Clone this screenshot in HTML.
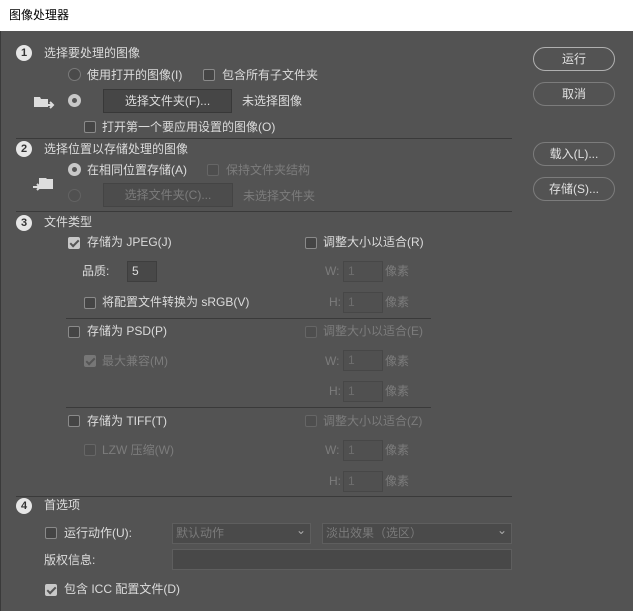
<!DOCTYPE html>
<html><head><meta charset="utf-8"><style>
*{margin:0;padding:0;box-sizing:border-box}
body{width:633px;height:611px;background:#535353;position:relative;overflow:hidden;font-family:"Liberation Sans","Noto Sans CJK SC",sans-serif;font-size:12px;color:#dcdcdc}
.a{position:absolute;white-space:nowrap;line-height:14px}
.d{color:#7c7c7c}
#title{position:absolute;left:0;top:0;width:633px;height:31px;background:#fff;color:#000;font-size:12px;line-height:31px;padding-left:9px}
#lb{position:absolute;left:0;top:31px;width:1px;height:580px;background:#3a3a3a}
.num{position:absolute;width:16px;height:16px;border-radius:50%;background:#e6e6e6;color:#333;font-weight:bold;font-size:11px;text-align:center;line-height:16px}
.cb{position:absolute;width:12px;height:12px;border:1px solid #8a8a8a;background:#454545;border-radius:2px}
.cb.dis{border-color:#666;background:#4e4e4e}
.cb.on::after{content:"";position:absolute;left:3px;top:0px;width:3px;height:7px;border:solid #555;border-width:0 2px 2px 0;transform:rotate(45deg)}
.cb.on{background:#c8c8c8;border-color:#c8c8c8}
.cb.on.dis{background:#777;border-color:#777}
.cb.on.dis::after{border-color:#555}
.rd{position:absolute;width:13px;height:13px;border-radius:50%;border:1px solid #7a7a7a;background:#4a4a4a}
.rd.on{background:#c8c8c8;border-color:#c8c8c8}
.rd.on::after{content:"";position:absolute;left:3px;top:3px;width:5px;height:5px;border-radius:50%;background:#555}
.rd.dis{border-color:#636363;background:#505050}
.btn{position:absolute;background:#464646;border:1px solid #383838;text-align:center;line-height:22px}
.in{position:absolute;background:#484848;border:1px solid #3e3e3e;padding-left:4px;line-height:18px}
.in.dis{background:#505050;border-color:#474747;color:#6e6e6e}
.hr{position:absolute;height:1px;background:#3a3a3a}
.pill{position:absolute;left:533px;width:82px;height:24px;border:1px solid #7c7c7c;border-radius:12px;text-align:center;line-height:22px;color:#e0e0e0}
.sel{position:absolute;background:#4a4a4a;border:1px solid #5e5e5e;color:#7a7a7a;padding-left:3px;line-height:18px}
.sel::after{content:"⌄";position:absolute;right:4px;top:-3px;color:#aaa;font-size:12px}
</style></head><body>
<div id="title">图像处理器</div>
<div id="lb"></div>

<div class="num" style="left:16px;top:45px">1</div>
<div class="a" style="left:44px;top:46px">选择要处理的图像</div>
<div class="rd" style="left:68px;top:68px"></div>
<div class="a" style="left:87px;top:68px">使用打开的图像(I)</div>
<div class="cb" style="left:203px;top:69px"></div>
<div class="a" style="left:222px;top:68px">包含所有子文件夹</div>
<svg style="position:absolute;left:33px;top:94px" width="22" height="16"><path d="M1 3h6l1 2h7v8H1z" fill="#ddd"/><path d="M13 11h6M17 8l3 3-3 3" stroke="#ddd" stroke-width="2" fill="none"/></svg>
<div class="rd on" style="left:68px;top:94px"></div>
<div class="btn" style="left:103px;top:89px;width:129px;height:24px">选择文件夹(F)...</div>
<div class="a" style="left:242px;top:94px">未选择图像</div>
<div class="cb" style="left:84px;top:121px"></div>
<div class="a" style="left:102px;top:120px">打开第一个要应用设置的图像(O)</div>
<div class="hr" style="left:16px;top:138px;width:496px"></div>

<div class="num" style="left:16px;top:141px">2</div>
<div class="a" style="left:44px;top:142px">选择位置以存储处理的图像</div>
<div class="rd on" style="left:68px;top:163px"></div>
<div class="a" style="left:87px;top:163px">在相同位置存储(A)</div>
<div class="cb dis" style="left:207px;top:164px"></div>
<div class="a d" style="left:226px;top:163px">保持文件夹结构</div>
<svg style="position:absolute;left:32px;top:177px" width="22" height="16"><path d="M7 1h7l1 1h6v10H7z" fill="#ddd"/><path d="M1 10h7M5 7l3 3-3 3" stroke="#ddd" stroke-width="2" fill="none"/></svg>
<div class="rd dis" style="left:68px;top:189px"></div>
<div class="btn d" style="left:103px;top:183px;width:130px;height:24px;background:#4c4c4c;border-color:#444">选择文件夹(C)...</div>
<div class="a d" style="left:243px;top:189px">未选择文件夹</div>
<div class="hr" style="left:16px;top:211px;width:496px"></div>

<div class="num" style="left:16px;top:215px">3</div>
<div class="a" style="left:44px;top:215px">文件类型</div>
<div class="cb on" style="left:68px;top:237px"></div>
<div class="a" style="left:87px;top:235px">存储为 JPEG(J)</div>
<div class="cb" style="left:305px;top:237px"></div>
<div class="a" style="left:323px;top:235px">调整大小以适合(R)</div>
<div class="a" style="left:82px;top:264px">品质:</div>
<div class="in" style="left:127px;top:261px;width:30px;height:21px;color:#ddd">5</div>
<div class="a d" style="left:325px;top:264px">W:</div><div class="in dis" style="left:343px;top:261px;width:40px;height:21px">1</div><div class="a d" style="left:385px;top:264px">像素</div>
<div class="cb" style="left:84px;top:297px"></div>
<div class="a" style="left:102px;top:295px">将配置文件转换为 sRGB(V)</div>
<div class="a d" style="left:329px;top:295px">H:</div><div class="in dis" style="left:343px;top:292px;width:40px;height:21px">1</div><div class="a d" style="left:385px;top:295px">像素</div>
<div class="hr" style="left:66px;top:318px;width:365px"></div>

<div class="cb" style="left:68px;top:326px"></div>
<div class="a" style="left:87px;top:324px">存储为 PSD(P)</div>
<div class="cb dis" style="left:305px;top:326px"></div>
<div class="a d" style="left:323px;top:324px">调整大小以适合(E)</div>
<div class="cb on dis" style="left:84px;top:355px"></div>
<div class="a d" style="left:102px;top:354px">最大兼容(M)</div>
<div class="a d" style="left:325px;top:354px">W:</div><div class="in dis" style="left:343px;top:350px;width:40px;height:21px">1</div><div class="a d" style="left:385px;top:354px">像素</div>
<div class="a d" style="left:329px;top:384px">H:</div><div class="in dis" style="left:343px;top:381px;width:40px;height:21px">1</div><div class="a d" style="left:385px;top:384px">像素</div>
<div class="hr" style="left:66px;top:407px;width:365px"></div>

<div class="cb" style="left:68px;top:415px"></div>
<div class="a" style="left:87px;top:414px">存储为 TIFF(T)</div>
<div class="cb dis" style="left:305px;top:415px"></div>
<div class="a d" style="left:323px;top:414px">调整大小以适合(Z)</div>
<div class="cb dis" style="left:84px;top:444px"></div>
<div class="a d" style="left:102px;top:443px">LZW 压缩(W)</div>
<div class="a d" style="left:325px;top:443px">W:</div><div class="in dis" style="left:343px;top:440px;width:40px;height:21px">1</div><div class="a d" style="left:385px;top:443px">像素</div>
<div class="a d" style="left:329px;top:474px">H:</div><div class="in dis" style="left:343px;top:471px;width:40px;height:21px">1</div><div class="a d" style="left:385px;top:474px">像素</div>
<div class="hr" style="left:16px;top:496px;width:496px"></div>

<div class="num" style="left:16px;top:498px">4</div>
<div class="a" style="left:44px;top:498px">首选项</div>
<div class="cb" style="left:45px;top:527px"></div>
<div class="a" style="left:64px;top:526px">运行动作(U):</div>
<div class="sel" style="left:172px;top:523px;width:139px;height:21px">默认动作</div>
<div class="sel" style="left:322px;top:523px;width:190px;height:21px">淡出效果（选区）</div>
<div class="a" style="left:44px;top:553px">版权信息:</div>
<div class="in" style="left:172px;top:549px;width:340px;height:21px;border-color:#5e5e5e"></div>
<div class="cb on" style="left:45px;top:584px"></div>
<div class="a" style="left:64px;top:582px">包含 ICC 配置文件(D)</div>

<div class="pill" style="top:47px;border-color:#b0b0b0">运行</div>
<div class="pill" style="top:82px">取消</div>
<div class="pill" style="top:142px">载入(L)...</div>
<div class="pill" style="top:177px">存储(S)...</div>
</body></html>
